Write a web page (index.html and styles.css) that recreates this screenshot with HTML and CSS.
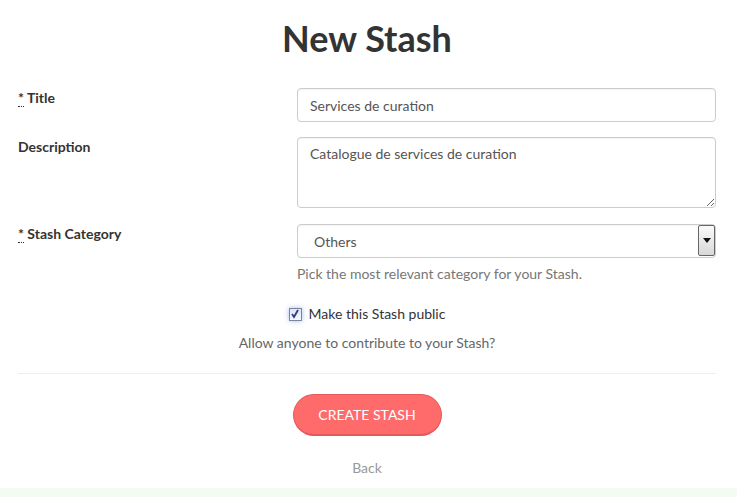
FILE: index.html
```html
<!DOCTYPE html>
<html lang="en">
<head>
    <meta charset="UTF-8">
    <meta name="viewport" content="width=device-width, initial-scale=1.0">
    <title>New Stash</title>
    <link rel="stylesheet" href="styles.css">
</head>
<body>
    <div class="panel">
        <h1>New Stash</h1>
        <form class="stash-form">
            <div class="row">
                <label for="title"><abbr title="required">*</abbr> Title</label>
                <input id="title" class="field" type="text" value="Services de curation">
            </div>
            <div class="row">
                <label for="desc">Description</label>
                <textarea id="desc" class="field area">Catalogue de services de curation</textarea>
            </div>
            <div class="row">
                <label for="cat"><abbr title="required">*</abbr> Stash Category</label>
                <div>
                    <div class="select-wrap">
                        <select id="cat" class="field select">
                            <option>Others</option>
                        </select>
                        <span class="select-arrow">
                            <svg width="8" height="5" viewBox="0 0 8 5"><path d="M0 0h8L4 5z" fill="#111"/></svg>
                        </span>
                    </div>
                    <p class="help">Pick the most relevant category for your Stash.</p>
                </div>
            </div>
            <div class="public">
                <label class="check-label">
                    <span class="checkbox">
                        <svg width="10" height="10" viewBox="0 0 10 10"><path d="M2 5l2 3 4-7" fill="none" stroke="#2b3d8c" stroke-width="1.8"/></svg>
                    </span>
                    Make this Stash public
                </label>
                <p class="public-help">Allow anyone to contribute to your Stash?</p>
            </div>
            <hr>
            <div class="actions">
                <button type="button" class="btn">CREATE STASH</button>
                <a href="#" class="back">Back</a>
            </div>
        </form>
    </div>
</body>
</html>
```

FILE: styles.css
```css
body {
    margin: 0;
    font-family: Lato, "Open Sans", sans-serif;
    font-size: 14px;
    line-height: 20px;
    color: #333;
    background-color: #f4fbf3;
}
.panel {
    background-color: #ffffff;
    padding: 18px 21px 10px 18px;
    box-shadow: 0 1px 3px rgba(0, 0, 0, 0.08);
}
h1 {
    margin: 0 0 30px;
    text-align: center;
    font-size: 36px;
    line-height: 40px;
    font-weight: 700;
    color: #333;
}
.row {
    display: grid;
    grid-template-columns: 279px 1fr;
    margin-bottom: 16px;
}
.row:first-of-type {
    margin-bottom: 15px;
}
.row label {
    font-weight: 700;
    color: #333;
}
abbr {
    text-decoration: none;
    border-bottom: 1px dotted #333;
}
.field {
    box-sizing: border-box;
    width: 100%;
    height: 34px;
    padding: 6px 12px;
    font-family: inherit;
    font-size: 14px;
    color: #555;
    border: 1px solid #ccc;
    border-radius: 4px;
    background-color: #fff;
    box-shadow: inset 0 1px 1px rgba(0, 0, 0, 0.05);
}
.area {
    height: 71px;
    padding-top: 7px;
    resize: vertical;
    display: block;
}
.select-wrap {
    position: relative;
}
.select {
    appearance: none;
    -webkit-appearance: none;
    padding-left: 16px;
    display: block;
}
.select-arrow {
    position: absolute;
    top: 1px;
    right: 1px;
    width: 17px;
    height: 31px;
    box-sizing: border-box;
    border: 1px solid #666;
    border-radius: 2px;
    background: linear-gradient(#fafafa, #d8d8d8);
    display: flex;
    align-items: center;
    justify-content: center;
}
.help {
    margin: 6px 0 0;
    color: #777;
}
.public {
    text-align: center;
    margin-top: 20px;
}
.check-label {
    display: inline-flex;
    align-items: center;
    gap: 7px;
}
.checkbox {
    width: 11px;
    height: 11px;
    border: 1px solid #7b8799;
    background: linear-gradient(#dfe4ec, #f8f9fb);
    box-shadow: 0 0 5px rgba(102, 140, 233, 0.6);
    display: flex;
    align-items: center;
    justify-content: center;
}
.public-help {
    margin: 9px 0 0;
    color: #666;
}
hr {
    border: 0;
    border-top: 1px solid #eeeeee;
    margin: 20px 0 20px;
}
.actions {
    display: flex;
    flex-direction: column;
    align-items: center;
}
.btn {
    width: 149px;
    height: 42px;
    border: 1px solid #e25a5a;
    border-bottom-width: 2px;
    border-radius: 21px;
    background-color: #ff6b6b;
    color: #fff;
    font-family: inherit;
    font-size: 14px;
}
.back {
    margin-top: 22px;
    color: #999;
    text-decoration: none;
}
```
